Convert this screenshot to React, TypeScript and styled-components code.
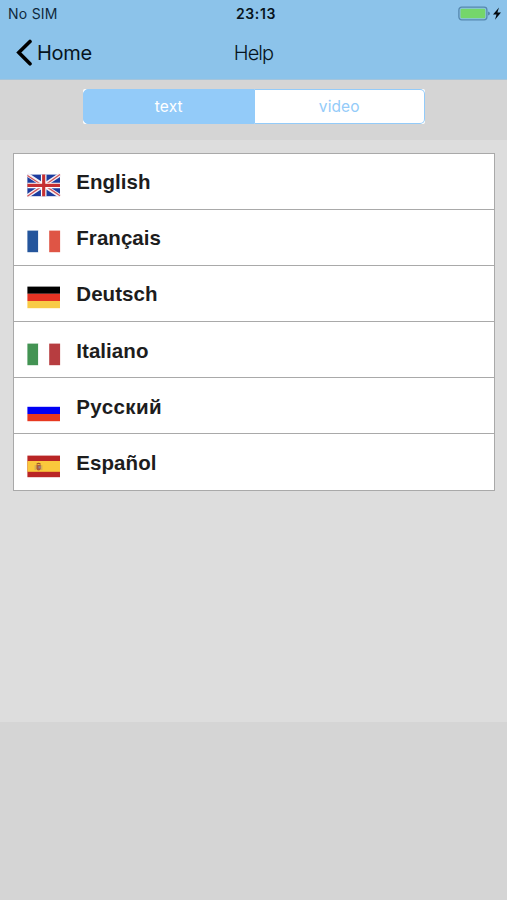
import React from "react";
import styled, { createGlobalStyle } from "styled-components";

const GlobalStyle = createGlobalStyle`
  * { box-sizing: border-box; }
  body { margin: 0; background: #d5d5d5; font-family: Inter, "Liberation Sans", sans-serif; }
`;

const Screen = styled.div`
  width: 507px;
  height: 900px;
  display: flex;
  flex-direction: column;
  background: #d5d5d5;
  overflow: hidden;
`;

const Header = styled.header`
  height: 80px;
  background: #8cc3ea;
  border-bottom: 1px solid #a5c4da;
  color: #071420;
`;

const Bar = styled.div<{ $height: number }>`
  height: ${(p) => p.$height}px;
  display: grid;
  grid-template-columns: 1fr auto 1fr;
  align-items: center;
`;

const Carrier = styled.span`
  padding-left: 8px;
  font-size: 14px;
  line-height: 20px;
  letter-spacing: 0.25px;
  color: #10293c;
`;

const Clock = styled.span`
  font-size: 14px;
  font-weight: 600;
  line-height: 20px;
  letter-spacing: 0.6px;
  padding-left: 5px;
`;

const Power = styled.div`
  display: flex;
  justify-content: flex-end;
  padding-right: 5px;
`;

const Back = styled.button`
  display: flex;
  align-items: center;
  gap: 4px;
  padding: 0 0 0 16px;
  border: 0;
  background: none;
  color: #071420;
  font-family: inherit;
  font-size: 20px;
  line-height: 26px;
  letter-spacing: -0.3px;
`;

const Title = styled.h1`
  margin: 0;
  font-size: 20px;
  line-height: 26px;
  font-weight: 300;
  letter-spacing: -0.9px;
`;

const Toolbar = styled.div`
  height: 60px;
  display: flex;
  justify-content: center;
  align-items: flex-start;
  padding: 9px 0 0 1px;
`;

const Segments = styled.div`
  width: 342px;
  height: 35px;
  display: flex;
  background: #fff;
  border-radius: 2px;
`;

const Segment = styled.button<{ $active?: boolean }>`
  flex: 1;
  border: 1px solid #93cbf9;
  border-left-width: ${(p) => (p.$active ? "1px" : "0")};
  border-radius: ${(p) => (p.$active ? "5px 0 0 5px" : "0 5px 5px 0")};
  background: ${(p) => (p.$active ? "#93cbf9" : "#fff")};
  color: ${(p) => (p.$active ? "#fff" : "#93cbf9")};
  font-family: inherit;
  font-size: 15.5px;
  letter-spacing: 0.1px;
  padding: 0;
`;

const Content = styled.main`
  height: 582px;
  padding: 12.5px 12px 0 13px;
  background: #dddddd;
`;

const LanguageList = styled.ul`
  list-style: none;
  margin: 0;
  padding: 0;
  border: 1px solid #a9a9a9;
  background: #fff;
`;

const Row = styled.li`
  height: 56.2px;
  display: flex;
  align-items: flex-start;
  gap: 16px;
  padding-left: 13.3px;
  &:not(:last-child) { border-bottom: 1px solid #a9a9a9; }
  &:last-child { height: 55.2px; }
`;

const FlagBox = styled.span`
  width: 33px;
  height: 23px;
  margin-top: 20.5px;
  svg { display: block; overflow: visible; }
`;

const Name = styled.span<{ $spacing: number }>`
  font-family: "Liberation Sans", Arial, sans-serif;
  font-size: 20.5px;
  font-weight: 700;
  line-height: 24px;
  margin-top: 16.5px;
  color: #1d1d1d;
  letter-spacing: ${(p) => p.$spacing}px;
`;

const FlagSvg = ({ children }: { children: React.ReactNode }) => (
  <svg width="33" height="23" viewBox="-0.4 -0.6 33 23">
    {children}
  </svg>
);

const Stripes = ({ colors, vertical }: { colors: string[]; vertical?: boolean }) => (
  <FlagSvg>
    {colors.map((c, i) =>
      vertical ? (
        <rect key={c} x={i * 10.9} width="10.9" height="21.6" fill={c} />
      ) : (
        <rect key={c} y={i * 7.2} width="32.6" height="7.2" fill={c} />
      )
    )}
  </FlagSvg>
);

const UnionFlag = () => (
  <FlagSvg>
    <svg width="32.6" height="21.6" viewBox="0 0 33 22" preserveAspectRatio="none">
      <rect width="33" height="22" fill="#1c3c9e" />
      <path d="M0 0 33 22M33 0 0 22" stroke="#f5f0f5" strokeWidth="4" />
      <path d="M0 1 14 10M33 0 20 9M0 22 13 13M33 21.5 19 12" stroke="#d05458" strokeWidth="1.3" />
      <path d="M16.5 0V22M0 11H33" stroke="#fff" strokeWidth="5.6" />
      <path d="M16.5 0V22M0 11H33" stroke="#c63032" strokeWidth="3.2" />
    </svg>
  </FlagSvg>
);

const SpanishFlag = () => (
  <FlagSvg>
    <rect width="32.6" height="21.6" fill="#b92525" />
    <rect y="5.4" width="32.6" height="10.8" fill="#fac83c" />
    <path d="M7.8 9.5v5M14.4 9.5v5" stroke="#c9a55c" strokeWidth="1" />
    <path d="M9 9.4h4.4v3.6q0 2-2.2 2T9 13Z" fill="#ad5a3c" />
    <path d="M9.2 8.8q2-2 4 0" fill="none" stroke="#a0562f" strokeWidth="1.3" />
    <rect x="11" y="10.6" width="2.2" height="2.2" fill="#96838c" />
  </FlagSvg>
);

const languages = [
  { name: "English", spacing: 0.02, flag: <UnionFlag /> },
  { name: "Français", spacing: 0.05, flag: <Stripes vertical colors={["#24559c", "#ffffff", "#df5545"]} /> },
  { name: "Deutsch", spacing: 0.06, flag: <Stripes colors={["#000000", "#e53323", "#f8cb46"]} /> },
  { name: "Italiano", spacing: 0.05, flag: <Stripes vertical colors={["#439353", "#ffffff", "#b73d40"]} /> },
  { name: "Русский", spacing: 0.4, flag: <Stripes colors={["#ffffff", "#0000f5", "#e73820"]} /> },
  { name: "Español", spacing: 0.07, flag: <SpanishFlag /> },
];

export default function App() {
  return (
    <Screen>
      <GlobalStyle />
      <Header>
        <Bar $height={27}>
          <Carrier>No SIM</Carrier>
          <Clock>23:13</Clock>
          <Power>
            <svg width="44" height="16" viewBox="0 0 44 16">
              <rect x="0.9" y="1.2" width="28" height="12.6" rx="2.8" fill="#8cc3ea" stroke="#5688ad" strokeWidth="1.3" />
              <rect x="2.5" y="2.8" width="24.8" height="9.4" rx="1.2" fill="#75d66a" />
              <path d="M30 5.5q2 .5 2 2t-2 2Z" fill="#5688ad" />
              <path d="M41 1.4 35 8.4h3.5L37 13.8l6-7.4h-3.6Z" fill="#050b10" />
            </svg>
          </Power>
        </Bar>
        <Bar $height={51}>
          <Back>
            <svg width="17" height="28" viewBox="0 0 17 28">
              <path d="M14 2.4 2.8 13.6 14 24.8" fill="none" stroke="#000" strokeWidth="3.6" strokeLinecap="round" strokeLinejoin="miter" />
            </svg>
            Home
          </Back>
          <Title>Help</Title>
          <span />
        </Bar>
      </Header>
      <Toolbar>
        <Segments>
          <Segment $active>text</Segment>
          <Segment>video</Segment>
        </Segments>
      </Toolbar>
      <Content>
        <LanguageList>
          {languages.map((l) => (
            <Row key={l.name}>
              <FlagBox>{l.flag}</FlagBox>
              <Name $spacing={l.spacing}>{l.name}</Name>
            </Row>
          ))}
        </LanguageList>
      </Content>
    </Screen>
  );
}
